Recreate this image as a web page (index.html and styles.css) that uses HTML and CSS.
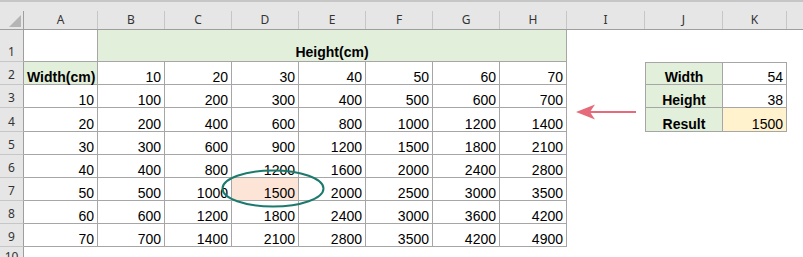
FILE: index.html
```html
<!DOCTYPE html>
<html>
<head>
<meta charset="utf-8">
<link rel="stylesheet" href="styles.css">
</head>
<body>
<div class="sheet">
  <div class="topstrip"></div>
  <div class="row colhead">
    <div class="rh corner"><span class="tri"></span></div>
    <div class="ch w-a">A</div>
    <div class="ch w-n">B</div>
    <div class="ch w-n">C</div>
    <div class="ch w-n">D</div>
    <div class="ch w-n">E</div>
    <div class="ch w-n">F</div>
    <div class="ch w-n">G</div>
    <div class="ch w-n">H</div>
    <div class="ch w-i">I</div>
    <div class="ch w-j">J</div>
    <div class="ch w-k">K</div>
    <div class="ch w-rest"></div>
  </div>

  <div class="row r1">
    <div class="rh">1</div>
    <div class="c w-a bd"></div>
    <div class="c w-m bd green bold center">Height(cm)</div>
    <div class="c w-i"></div><div class="c w-j"></div><div class="c w-k"></div>
  </div>

  <div class="row r2">
    <div class="rh">2</div>
    <div class="c w-a bd green bold">Width(cm)</div>
    <div class="c w-n bd num">10</div><div class="c w-n bd num">20</div><div class="c w-n bd num">30</div><div class="c w-n bd num">40</div><div class="c w-n bd num">50</div><div class="c w-n bd num">60</div><div class="c w-n bd num">70</div>
    <div class="c w-i"></div>
    <div class="c w-j bd bl bt green bold center">Width</div>
    <div class="c w-k bd bt num">54</div>
  </div>

  <div class="row r3">
    <div class="rh">3</div>
    <div class="c w-a bd num">10</div>
    <div class="c w-n bd num">100</div><div class="c w-n bd num">200</div><div class="c w-n bd num">300</div><div class="c w-n bd num">400</div><div class="c w-n bd num">500</div><div class="c w-n bd num">600</div><div class="c w-n bd num">700</div>
    <div class="c w-i"></div>
    <div class="c w-j bd bl green bold center">Height</div>
    <div class="c w-k bd num">38</div>
  </div>

  <div class="row r4">
    <div class="rh">4</div>
    <div class="c w-a bd num">20</div>
    <div class="c w-n bd num">200</div><div class="c w-n bd num">400</div><div class="c w-n bd num">600</div><div class="c w-n bd num">800</div><div class="c w-n bd num">1000</div><div class="c w-n bd num">1200</div><div class="c w-n bd num">1400</div>
    <div class="c w-i"></div>
    <div class="c w-j bd bl green bold center">Result</div>
    <div class="c w-k bd num gold">1500</div>
  </div>

  <div class="row r5">
    <div class="rh">5</div>
    <div class="c w-a bd num">30</div>
    <div class="c w-n bd num">300</div><div class="c w-n bd num">600</div><div class="c w-n bd num">900</div><div class="c w-n bd num">1200</div><div class="c w-n bd num">1500</div><div class="c w-n bd num">1800</div><div class="c w-n bd num">2100</div>
  </div>

  <div class="row r6">
    <div class="rh">6</div>
    <div class="c w-a bd num">40</div>
    <div class="c w-n bd num">400</div><div class="c w-n bd num">800</div><div class="c w-n bd num">1200</div><div class="c w-n bd num">1600</div><div class="c w-n bd num">2000</div><div class="c w-n bd num">2400</div><div class="c w-n bd num">2800</div>
  </div>

  <div class="row r7">
    <div class="rh">7</div>
    <div class="c w-a bd num">50</div>
    <div class="c w-n bd num">500</div><div class="c w-n bd num">1000</div><div class="c w-n bd num peach">1500</div><div class="c w-n bd num">2000</div><div class="c w-n bd num">2500</div><div class="c w-n bd num">3000</div><div class="c w-n bd num">3500</div>
  </div>

  <div class="row r8">
    <div class="rh">8</div>
    <div class="c w-a bd num">60</div>
    <div class="c w-n bd num">600</div><div class="c w-n bd num">1200</div><div class="c w-n bd num">1800</div><div class="c w-n bd num">2400</div><div class="c w-n bd num">3000</div><div class="c w-n bd num">3600</div><div class="c w-n bd num">4200</div>
  </div>

  <div class="row r9">
    <div class="rh">9</div>
    <div class="c w-a bd num">70</div>
    <div class="c w-n bd num">700</div><div class="c w-n bd num">1400</div><div class="c w-n bd num">2100</div><div class="c w-n bd num">2800</div><div class="c w-n bd num">3500</div><div class="c w-n bd num">4200</div><div class="c w-n bd num">4900</div>
  </div>

  <div class="row r10">
    <div class="rh">10</div>
  </div>

  <svg class="overlay" width="803" height="257" viewBox="0 0 803 257">
    <ellipse cx="273" cy="188.5" rx="50.5" ry="18" fill="none" stroke="#1b7a6c" stroke-width="2"/>
    <line x1="589" y1="112" x2="636" y2="112" stroke="#e56a7a" stroke-width="2"/>
    <path d="M576 112 L595 104.5 L590 112 L595 119.5 Z" fill="#e56a7a"/>
  </svg>
</div>
</body>
</html>
```

FILE: styles.css
```css
html, body {
  margin: 0;
  padding: 0;
  background: #fff;
}

.sheet {
  position: relative;
  width: 803px;
  height: 257px;
  overflow: hidden;
  background: #fff;
  font-family: "Liberation Sans", Arial, sans-serif;
  font-size: 14px;
  color: #000;
}

.topstrip {
  height: 11px;
  box-sizing: border-box;
  background: #e6e6e6;
  border-top: 2px solid #c6c6c6;
}

.row {
  display: flex;
}

.colhead {
  height: 19px;
  box-sizing: border-box;
  background: #e6e6e6;
  border-bottom: 1px solid #9e9e9e;
}

.ch {
  flex: none;
  box-sizing: border-box;
  border-right: 1px solid #c6c6c6;
  display: flex;
  align-items: center;
  justify-content: center;
  font-family: "Noto Sans", "Liberation Sans", sans-serif;
  font-size: 12px;
  line-height: 14px;
  color: #333;
}

.ch.w-rest {
  flex: 1;
  border-right: none;
}

.rh {
  width: 24px;
  flex: none;
  box-sizing: border-box;
  background: #e6e6e6;
  border-right: 1px solid #9e9e9e;
  border-bottom: 1px solid #c6c6c6;
  display: flex;
  align-items: flex-end;
  justify-content: center;
  padding-bottom: 2px;
  font-family: "Noto Sans", "Liberation Sans", sans-serif;
  font-size: 12px;
  line-height: 14px;
  color: #333;
}

.rh.corner {
  border-bottom: none;
  justify-content: flex-end;
  padding: 0 2px 2px 0;
}

.tri {
  width: 0;
  height: 0;
  border-left: 12px solid transparent;
  border-bottom: 12px solid #b5b5b5;
}

.r1 { height: 32px; }
.r2, .r3, .r5, .r6, .r7, .r8, .r9 { height: 23px; }
.r4 { height: 24px; }
.r10 { height: 20px; }

.w-a { width: 74px; }
.w-n { width: 67px; }
.w-m { width: 469px; }
.w-i { width: 78px; }
.w-j { width: 78px; }
.w-k { width: 64px; }

.c {
  flex: none;
  box-sizing: border-box;
  display: flex;
  align-items: flex-end;
  padding: 0 3px;
  line-height: 14px;
  white-space: nowrap;
}

.bd {
  border-right: 1px solid #a6a6a6;
  border-bottom: 1px solid #a6a6a6;
}

.bl { border-left: 1px solid #a6a6a6; }
.bt { border-top: 1px solid #a6a6a6; }

.num { justify-content: flex-end; }
.center { justify-content: center; }
.bold { font-weight: bold; }

.green { background: #e2efda; }
.peach { background: #fce4d6; }
.gold { background: #fff2cc; }

.r1 .c { padding-bottom: 2px; }

.overlay {
  position: absolute;
  left: 0;
  top: 0;
  pointer-events: none;
}
```
